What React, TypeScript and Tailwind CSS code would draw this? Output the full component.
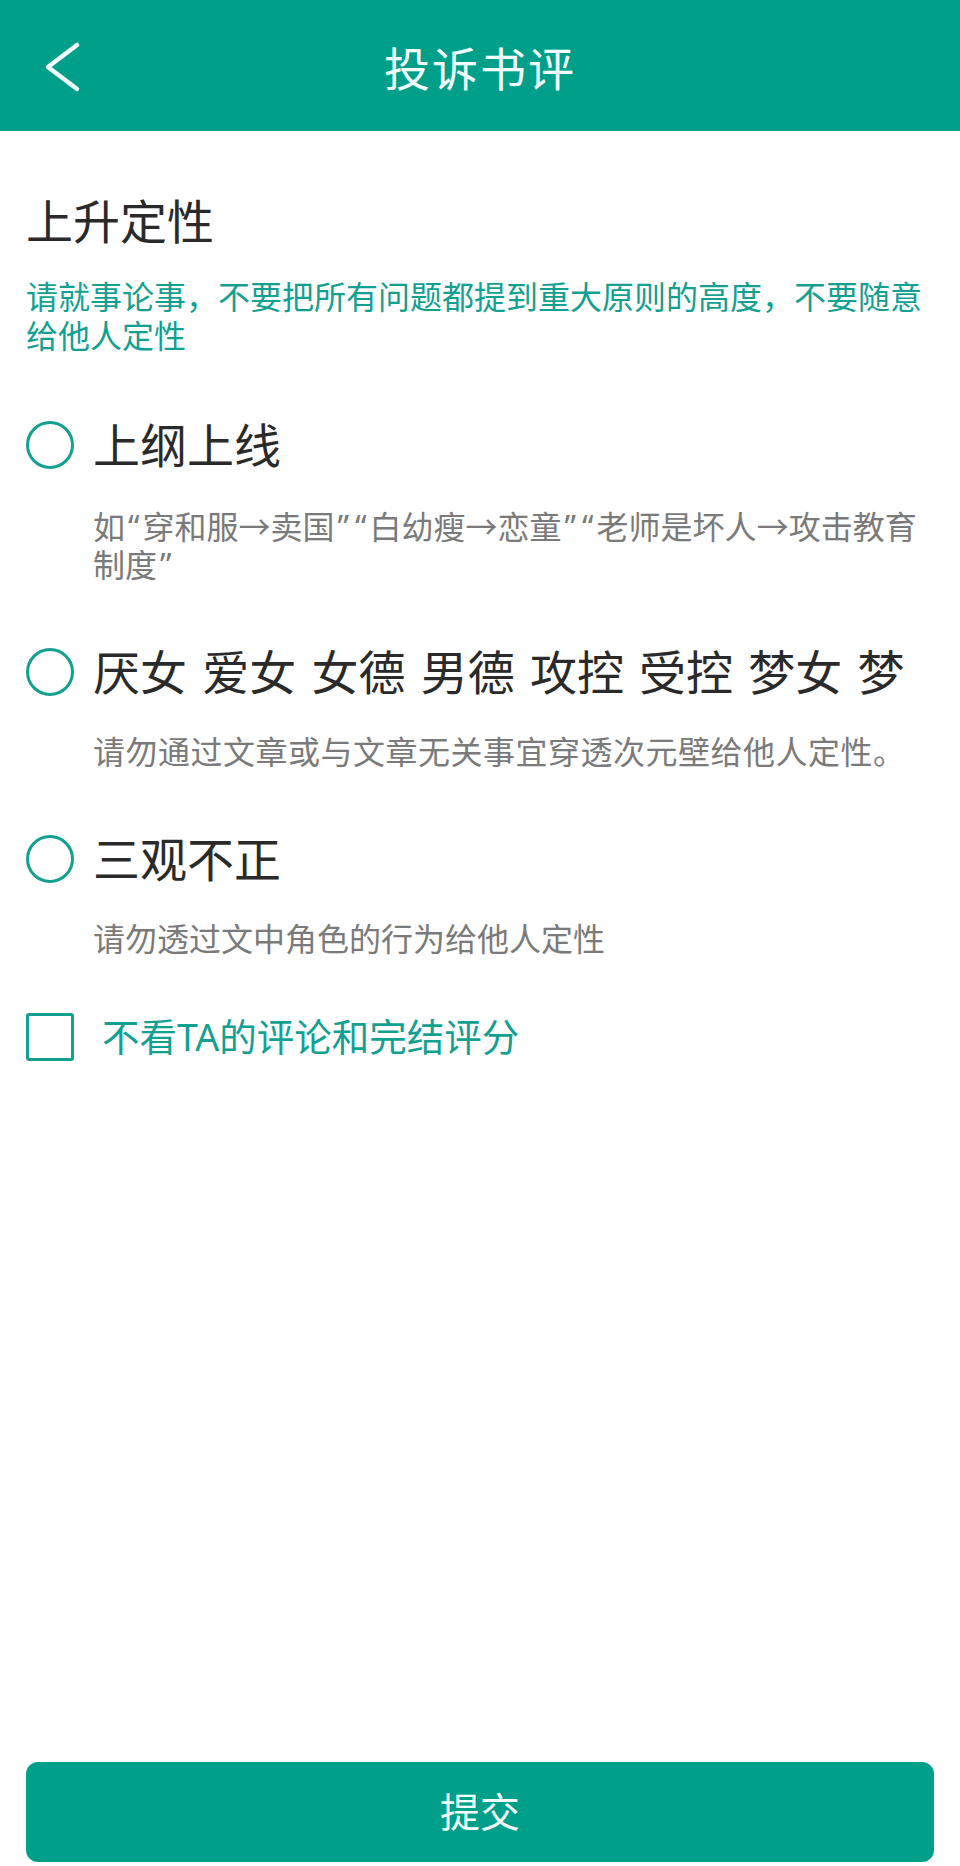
import { useState } from 'react';

// quotes and arrows get their own spacing so the line reads like the app
const Q = ({ c }: { c: string }) => <span className="mx-[3px]">{c}</span>;
const Arrow = () => <span className="font-['Noto_Sans_CJK_SC']">→</span>;

const options = [
  {
    key: 'gang',
    label: '上纲上线',
    desc: (
      <>
        <span className="block whitespace-nowrap">
          如<Q c="“" />穿和服<Arrow />卖国<Q c="”" /><Q c="“" />白幼瘦<Arrow />恋童<Q c="”" />
          <Q c="“" />老师是坏人<Arrow />攻击教育
        </span>
        <span className="block">
          制度<Q c="”" />
        </span>
      </>
    ),
  },
  {
    key: 'label',
    label: '厌女 爱女 女德 男德 攻控 受控 梦女 梦',
    desc: <span className="tracking-[0.5px]">请勿通过文章或与文章无关事宜穿透次元壁给他人定性。</span>,
  },
  {
    key: 'sanguan',
    label: '三观不正',
    desc: <>请勿透过文中角色的行为给他人定性</>,
  },
];

export default function App() {
  const [selected, setSelected] = useState<string | null>(null);
  const [blocked, setBlocked] = useState(false);

  return (
    <div
      className="flex min-h-[1866px] flex-col bg-white"
      style={{ fontFamily: '"Noto Sans", "Noto Sans CJK SC", sans-serif' }}
    >
      <header className="relative flex h-[131px] shrink-0 items-center justify-center bg-[#009f8a]">
        <button className="absolute left-[42px] top-[40px]">
          <svg width="44" height="56" viewBox="0 0 44 56" fill="none">
            <polyline
              points="35,5 6,27 35,49"
              stroke="#f2fffc"
              strokeWidth="4.5"
              strokeLinecap="round"
              strokeLinejoin="round"
            />
          </svg>
        </button>
        <h1 className="mt-[6px] text-[46px] tracking-[2px] text-[#f2fffc]">投诉书评</h1>
      </header>

      <main className="px-[26px]">
        <h2 className="mt-[62px] text-[47px] leading-[56px] text-[#2a2a2a]">上升定性</h2>
        <p className="mt-[28px] text-[32px] leading-[39px] text-[#12a191]">
          <span className="block whitespace-nowrap">请就事论事，不要把所有问题都提到重大原则的高度，不要随意</span>
          <span className="block">给他人定性</span>
        </p>

        {options.map((o, i) => (
          <div key={o.key} className={i === 0 ? 'mt-[62px]' : 'mt-[60px]'}>
            <button
              onClick={() => setSelected(o.key)}
              className="flex h-[56px] w-full items-center gap-[19px] text-left"
            >
              <span className="flex h-[48px] w-[48px] shrink-0 items-center justify-center rounded-full border-[3.5px] border-[#14a08f]">
                {selected === o.key && <span className="h-[24px] w-[24px] rounded-full bg-[#14a08f]" />}
              </span>
              <span className="whitespace-nowrap text-[47px] leading-[56px] text-[#2a2a2a] [word-spacing:3px]">
                {o.label}
              </span>
            </button>
            <p className="mt-[33px] pl-[67px] text-[32px] leading-[38px] text-[#7a7a7a]">{o.desc}</p>
          </div>
        ))}

        <button
          onClick={() => setBlocked(!blocked)}
          className="mt-[55px] flex items-center gap-[28px] text-left"
        >
          <span className="flex h-[48px] w-[48px] shrink-0 items-center justify-center rounded-[3px] border-[3.5px] border-[#14a08f]">
            {blocked && <span className="h-[24px] w-[24px] bg-[#14a08f]" />}
          </span>
          <span className="text-[37.5px] leading-[48px] text-[#12a191]">不看TA的评论和完结评分</span>
        </button>
      </main>

      <div className="mt-auto px-[26px] pb-[4px]">
        <button className="flex h-[100px] w-full items-center justify-center rounded-[12px] bg-[#009f8a] text-[40px] text-[#f2fffc]">
          提交
        </button>
      </div>
    </div>
  );
}
